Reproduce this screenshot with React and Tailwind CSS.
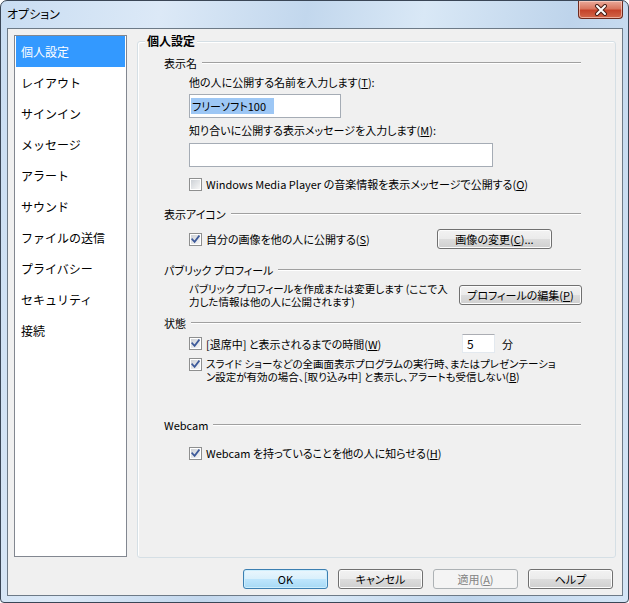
import React from "react";

function Check({ checked }) {
  return (
    <span className="w-[13px] h-[13px] shrink-0 border border-[#8e8f8f] bg-white p-[1px] flex">
      <span className="flex-1 flex items-center justify-center bg-[linear-gradient(135deg,#cdd1d6,#f7f7f7)]">
        {checked && (
          <svg width="9" height="9" viewBox="0 0 9 9">
            <path d="M1.2 4.3 L3.6 6.9 L7.9 1.2" stroke="#3d5a9a" strokeWidth="1.8" fill="none" strokeLinecap="square" />
          </svg>
        )}
      </span>
    </span>
  );
}

function Btn({ children, variant, className = "" }) {
  const base =
    "h-[20px] rounded-[3px] border flex items-center justify-center text-[11px] leading-none shrink-0";
  const v =
    variant === "default"
      ? "border-[#3c7fb1] bg-[linear-gradient(#eaf6fd_0%,#d9f0fc_50%,#bee6fd_50%,#a7d9f5_100%)] shadow-[inset_0_0_0_1px_#cdeefd] text-black"
      : variant === "disabled"
      ? "border-[#adb2b5] bg-[#f4f4f4] text-[#838383]"
      : "border-[#707070] bg-[linear-gradient(#f2f2f2_0%,#ebebeb_50%,#dddddd_50%,#cfcfcf_100%)] shadow-[inset_0_0_0_1px_#fcfcfc] text-black";
  return <div className={`${base} ${v} ${className}`}>{children}</div>;
}

function Section({ title, className = "" }) {
  return (
    <div className={`h-[16px] flex items-center ${className}`}>
      <span className="whitespace-nowrap">{title}</span>
      <span className="flex-1 ml-[5px] h-[2px] border-t border-t-[#a0a0a0] border-b border-b-white"></span>
    </div>
  );
}

const items = [
  "個人設定",
  "レイアウト",
  "サインイン",
  "メッセージ",
  "アラート",
  "サウンド",
  "ファイルの送信",
  "プライバシー",
  "セキュリティ",
  "接続",
];

export default function App() {
  return (
    <div className="w-[629px] h-[603px] rounded-t-[7px] rounded-b-[4px] border border-[#3a4656] bg-[linear-gradient(100deg,#c9ddf2_0%,#dce9f7_22%,#c2d7ed_42%,#d9e8f6_58%,#bed4eb_78%,#d4e5f6_100%)] flex flex-col font-['Noto_Sans_CJK_JP',sans-serif] [font-feature-settings:'palt'] text-black overflow-hidden">
      {/* title bar */}
      <div className="h-[27px] shrink-0 flex items-start">
        <span className="pl-[6px] pt-[5px] text-[12px] leading-[16px]">オプション</span>
        <div className="ml-auto mr-[5px] w-[45px] h-[18px] rounded-b-[4px] border border-t-0 border-[#6e2a1e] bg-[linear-gradient(#eaaa9a_0%,#d9765f_45%,#c5432a_55%,#d2674a_100%)] shadow-[inset_0_0_0_1px_rgba(255,220,210,0.6)] flex items-center justify-center">
          <svg width="14" height="12" viewBox="0 0 14 12">
            <path d="M3 2 L11 10 M11 2 L3 10" stroke="#4a2018" strokeWidth="4" strokeLinecap="round" />
            <path d="M3 2 L11 10 M11 2 L3 10" stroke="#ffffff" strokeWidth="2" strokeLinecap="round" />
          </svg>
        </div>
      </div>

      {/* client */}
      <div className="flex-1 ml-[6px] mr-[5px] mb-[6px] border border-[#6d7a87] bg-[#f0f0f0] flex flex-col">
        <div className="flex pl-[6px] pt-[6px]">
          {/* list */}
          <div className="w-[113px] h-[522px] border border-[#828790] bg-white shrink-0 pt-0">
            {items.map((t, i) => (
              <div
                key={t}
                className={`h-[31px] mx-[1px] flex items-center pl-[5px] text-[12px] [font-feature-settings:normal] ${
                  i === 0 ? "bg-[#3399ff] text-white" : "text-black"
                }`}
              >
                {t}
              </div>
            ))}
          </div>

          {/* group box */}
          <div className="ml-[10px] mt-[6px] w-[479px] h-[517px] border border-[#d5dfe5] shadow-[inset_1px_1px_0_white] rounded-[3px] pl-[26px] pr-[34px] text-[11px] leading-[16px]">
            <div className="-mt-[9px] ml-[-19px] w-fit px-[2px] bg-[#f0f0f0] font-bold text-[12px] leading-[16px]">
              個人設定
            </div>

            <Section title="表示名" className="mt-[6px]" />
            <div className="ml-[25px]">
              <div className="mt-[3px] h-[16px] flex items-center whitespace-nowrap">
                他の人に公開する名前を入力します(<u>T</u>):
              </div>
              <div className="mt-[4px] w-[152px] h-[24px] border border-[#a5acb5] bg-white flex items-center pl-[1px]">
                <span className="bg-[#9dc7f5] px-[1px] h-[16px] leading-[16px] pr-[8px]">フリーソフト100</span>
              </div>
              <div className="mt-[4px] h-[16px] flex items-center whitespace-nowrap">
                知り合いに公開する表示メッセージを入力します(<u>M</u>):
              </div>
              <div className="mt-[5px] w-[304px] h-[24px] border border-[#a5acb5] bg-white"></div>
              <div className="mt-[9px] h-[16px] flex items-center gap-[4px] whitespace-nowrap">
                <Check />
                <span>Windows Media Player の音楽情報を表示メッセージで公開する(<u>O</u>)</span>
              </div>
            </div>

            <Section title="表示アイコン" className="mt-[14px]" />
            <div className="ml-[25px] mt-[7px] h-[20px] flex items-center">
              <Check checked />
              <span className="ml-[4px] whitespace-nowrap">
                自分の画像を他の人に公開する(<u>S</u>)
              </span>
              <Btn className="ml-auto mr-[29px] w-[115px]">
                画像の変更(<u>C</u>)...
              </Btn>
            </div>

            <Section title="パブリック プロフィール" className="mt-[13px]" />
            <div className="ml-[25px] mt-[4px] flex items-start">
              <div className="text-[10.5px] leading-[13px] whitespace-nowrap">
                パブリック プロフィールを作成または変更します (ここで入
                <br />
                力した情報は他の人に公開されます)
              </div>
              <Btn className="ml-auto mr-[-1px] mt-[3px] w-[123px]">
                プロフィールの編集(<u>P</u>)
              </Btn>
            </div>

            <Section title="状態" className="mt-[7px]" />
            <div className="ml-[25px] mt-[3px] h-[19px] flex items-center">
              <div className="w-[273px] flex items-center">
                <Check checked />
                <span className="ml-[4px] whitespace-nowrap">
                  [退席中] と表示されるまでの時間(<u>W</u>)
                </span>
              </div>
              <div className="w-[33px] h-[19px] border border-[#e3e9ef] border-t-[#abadb3] bg-white pl-[4px] leading-[17px] text-[12px]">
                5
              </div>
              <span className="ml-[7px]">分</span>
            </div>
            <div className="ml-[25px] mt-[4px] flex items-start">
              <span className="mt-[1px]">
                <Check checked />
              </span>
              <div className="ml-[4px] text-[10.5px] leading-[13px] whitespace-nowrap">
                スライド ショーなどの全画面表示プログラムの実行時、またはプレゼンテーショ
                <br />
                ン設定が有効の場合、[取り込み中] と表示し、アラートも受信しない(<u>B</u>)
              </div>
            </div>

            <Section title="Webcam" className="mt-[34px]" />
            <div className="ml-[25px] mt-[12px] h-[16px] flex items-center">
              <Check checked />
              <span className="ml-[4px] whitespace-nowrap">
                Webcam を持っていることを他の人に知らせる(<u>H</u>)
              </span>
            </div>
          </div>
        </div>

        {/* bottom buttons */}
        <div className="mt-[11px] flex justify-end pr-[9px] gap-[10px]">
          <Btn variant="default" className="w-[85px]">OK</Btn>
          <Btn className="w-[85px]">キャンセル</Btn>
          <Btn variant="disabled" className="w-[85px]">
            適用(<u>A</u>)
          </Btn>
          <Btn className="w-[85px]">ヘルプ</Btn>
        </div>
      </div>
    </div>
  );
}
